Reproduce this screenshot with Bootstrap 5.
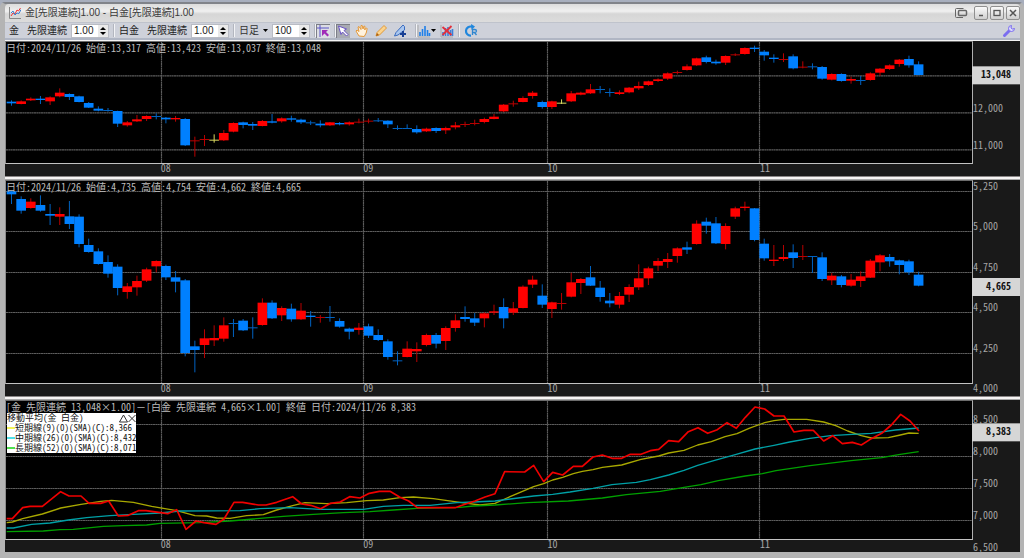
<!DOCTYPE html>
<html lang="ja">
<head>
<meta charset="utf-8">
<meta name="viewport" content="width=device-width, initial-scale=1">
<title>金[先限連続]1.00 - 白金[先限連続]1.00</title>
<link href="https://cdn.jsdelivr.net/npm/bootstrap@5.3.0/dist/css/bootstrap.min.css" rel="stylesheet">
<style>
  :root { --chart-font: "Noto Sans Mono CJK JP", "Liberation Mono", "Noto Sans CJK JP", monospace; }
  body { background: #a7aebd; font: 10px/12px "Liberation Sans", "Noto Sans CJK JP", sans-serif; color: #222; }
  .app-window { border: solid #b4b4b4; border-width: 0 4px 6px 5px; border-top: 2px solid #808389; margin-top: 2px;
    min-height: calc(100vh - 2px); border-radius: 5px 5px 0 0; background: #b4b4b4; }
  .title-strip { height: 18px; background: linear-gradient(#dcdcdc, #f0f0f0 40%, #d6d6d6 55%, #dcdcdc); border-radius: 4px 4px 0 0; }
  .title-strip h1 { font-size: 10px; line-height: 18px; color: #3a3a3a; }
  .title-btns { gap: 2px; }
  .win-btn { width: 14px; height: 14px; border: 1px solid #8f8f8f; border-radius: 2px; background: linear-gradient(#fafafa, #cfcfcf); }
  .flat-btn { border: 0; background: none; width: 14px; height: 14px; }
  .flat-btn.pressed { background: #a9abb3; box-shadow: inset 1px 1px 0 #7c7e86; }
  .flat-btn.lit { background: #dcdde3; }
  button svg, .title-strip svg, .tools svg { display: block; }
  .tools { height: 18px; background: #ced1da; border-top: 1px solid #bfc3cc; border-bottom: 2px solid #b0b6c4; }
  .tools .names, .tools .group { gap: 8px; }
  .tools .group { gap: 5px; }
  .sep { width: 2px; height: 13px; border-left: 1px solid #b3b6bf; background: #f2f3f6; }
  .num { height: 14px; background: #fff; border: 1px solid #b9bcc4; }
  .num input { width: 26px; border: 0; padding: 0 2px; font-size: 10px; line-height: 12px; color: #222; outline: 0; background: none; }
  .num .spin { width: 10px; background: #e9e9e9; }
  .num .spin button { height: 6px; border: 0; background: none; width: 10px; }
  .period { appearance: none; border: 0; background: none; font-size: 10px; line-height: 12px; width: 20px; color: #333; }
  .edge { height: 1px; background: #f4f4f4; }
  .pane { background: #191919; }
  .pane-gold { flex: 135 1 0; } .pane-plat { flex: 216 1 0; } .pane-spread { flex: 152 1 0; }
  .split { height: 4px; background: linear-gradient(#8a8686 25%, #f6f4f4 25%, #f6f4f4 75%, #a8a8a8 75%); }
  .plot { background: #000; border: 1px solid; border-color: #6c6c6c #b0b0b0 #c2c2c2 #8c8c8c; min-height: 90px; flex: 1 1 0; }
  .plot > svg { position: absolute; inset: 0; width: 100%; height: 100%; }
  .months { width: 100%; height: 12px; overflow: visible; display: block; }
  .scale { width: 47px; }
  .scale > svg { position: absolute; top: 1px; left: 0; width: 100%; height: calc(100% - 14px); overflow: visible; }
  .months text, .scale text { font: 10px var(--chart-font); fill: #a6a6a6; }
  .scale text.last { font-weight: 700; fill: #111; }
  .readout { position: absolute; left: 0; top: 0; font: 10px/11px var(--chart-font); color: #bdbdbd; white-space: nowrap; }
  .key { position: absolute; left: 1px; top: 12px; width: 129px; background: #fff; color: #111; font: 9px/10px var(--chart-font); white-space: nowrap; }
  .key .swatch { width: 8px; height: 2px; flex: none; }
  .sw-short { background: #f4f45a; } .sw-mid { background: #4fe0e8; } .sw-long { background: #4fe04f; }
  .key button { border: 0; background: none; padding: 0; }
</style>
</head>
<body>
<main class="app-window d-flex flex-column">
  <header class="title-strip d-flex align-items-center">
    <svg class="ms-1" width="12" height="12" viewBox="0 0 12 12" fill="none"><path d="M.5 0v11.500H12" stroke="#888"/><path d="M2 9l2-3 2 1 2-4 1.500 1 2-3" stroke="#e33"/><path d="M2 6l2-2 2 4 2-2 2 .5 2-4" stroke="#3b7fd0"/></svg>
    <h1 class="mb-0 ms-1 fw-normal">金[先限連続]1.00 - 白金[先限連続]1.00</h1>
    <div class="title-btns d-flex align-items-center ms-auto">
      <button class="flat-btn p-0 me-1" aria-label="別ウィンドウ"><svg width="14" height="14" viewBox="0 0 14 14" fill="none" stroke="#666"><path d="M9 11.500H2.500q-1 0-1-1v-7q0-1 1-1h7"/><rect x="4.500" y="4.500" width="8" height="5" rx="1" stroke-width="1.500"/></svg></button>
      <button class="win-btn p-0" aria-label="最小化"><svg width="12" height="12" viewBox="0 0 12 12"><path d="M4 8.500h4" stroke="#555" stroke-width="1.500"/></svg></button>
      <button class="win-btn p-0" aria-label="最大化"><svg width="12" height="12" viewBox="0 0 12 12"><rect x="3" y="3.500" width="6" height="5" fill="none" stroke="#555" stroke-width="1.300"/></svg></button>
      <button class="win-btn p-0" aria-label="閉じる"><svg width="12" height="12" viewBox="0 0 12 12"><path d="M3 3l6 6M9 3l-6 6" stroke="#555" stroke-width="1.500"/></svg></button>
    </div>
  </header>

  <nav class="tools d-flex align-items-center" aria-label="ツールバー">
    <label for="q1" class="names d-flex ps-1"><span>金</span><span>先限連続</span></label>
    <div class="num d-flex ms-1"><input id="q1" value="1.00"><div class="spin d-flex flex-column"><button class="p-0" aria-label="増"><svg width="10" height="6"><path d="M2 5l3-3 3 3z"/></svg></button><button class="p-0" aria-label="減"><svg width="10" height="6"><path d="M2 1l3 3 3-3z"/></svg></button></div></div>
    <span class="sep mx-1"></span>
    <label for="q2" class="names d-flex"><span>白金</span><span>先限連続</span></label>
    <div class="num d-flex ms-1"><input id="q2" value="1.00"><div class="spin d-flex flex-column"><button class="p-0" aria-label="増"><svg width="10" height="6"><path d="M2 5l3-3 3 3z"/></svg></button><button class="p-0" aria-label="減"><svg width="10" height="6"><path d="M2 1l3 3 3-3z"/></svg></button></div></div>
    <span class="sep mx-1"></span>
    <label class="d-flex align-items-center"><select class="period p-0" aria-label="足種"><option>日足</option></select><svg class="mx-1" width="5" height="4"><path d="M0 0h5l-2.500 3z"/></svg></label>
    <div class="num d-flex"><input value="100" aria-label="表示本数"><div class="spin d-flex flex-column"><button class="p-0" aria-label="増"><svg width="10" height="6"><path d="M2 5l3-3 3 3z"/></svg></button><button class="p-0" aria-label="減"><svg width="10" height="6"><path d="M2 1l3 3 3-3z"/></svg></button></div></div>
    <span class="sep ms-1"></span>
    <button class="flat-btn pressed lit p-0" aria-label="クロスライン"><svg width="14" height="14" viewBox="0 0 14 14"><path d="M4 1v12M1 4h12" stroke="#5b54c8"/><path d="M6 6l6 0-2 2 3 3-1.500 1.500-3-3L6 12z" fill="#a02bb8"/></svg></button>
    <span class="sep ms-1"></span>
    <div class="group d-flex">
      <button class="flat-btn pressed p-0" aria-label="選択"><svg width="14" height="14" viewBox="0 0 14 14"><path d="M2.500 2l8 3-2.500 1.500L12 10.500 10.500 12 6.500 8 5 10.500z" fill="#fff" stroke="#6a54c4"/></svg></button>
      <button class="flat-btn p-0" aria-label="移動"><svg width="14" height="14" viewBox="0 0 14 14"><path d="M4 12L1 7l1-1 2 1.500L3 3l1-.5L6 5.500V1.500h1.200L8 5l1-3 1 .4L9.700 6l1.500-2 1 .5-1 4.500-2 3.500z" fill="#fff3df" stroke="#e49a3c"/></svg></button>
      <button class="flat-btn p-0" aria-label="鉛筆"><svg width="14" height="14" viewBox="0 0 14 14"><path d="M2 12l1-3.500L10 1.500 12.500 4 5.500 11z" fill="#fbd38d" stroke="#e09a3b"/><path d="M2 12l1-3 2 2z" fill="#a65d12"/></svg></button>
      <button class="flat-btn p-0" aria-label="線の追加"><svg width="14" height="14" viewBox="0 0 14 14"><path d="M1.500 12L3 8.500 10 1l1.500 1.500V6L5 11z" fill="#a9c6ee" stroke="#3a6cc0"/><path d="M10 7v6M7 10h6" stroke="#173f94" stroke-width="2"/></svg></button>
    </div>
    <span class="sep ms-2"></span>
    <button class="flat-btn p-0" aria-label="指標"><svg width="14" height="14" viewBox="0 0 14 14"><path d="M1 1v12h12" stroke="#aaa" fill="none"/><path d="M3 12V8M5.500 12V5M8 12V2M10.500 12V6M12.500 12V9" stroke="#1f7fe8" stroke-width="1.600"/></svg></button>
    <svg class="me-1" width="5" height="4"><path d="M0 0h5l-2.500 3z"/></svg>
    <button class="flat-btn p-0" aria-label="指標の削除"><svg width="14" height="14" viewBox="0 0 14 14"><path d="M1 1v12h12" stroke="#aaa" fill="none"/><path d="M3 12V8M5.500 12V4M8 12V3M10.500 12V6M12.500 12V5" stroke="#3b7fd8" stroke-width="1.600"/><path d="M2.500 3l9 8M11.500 2l-9 9" stroke="#e2303c" stroke-width="1.800"/></svg></button>
    <span class="sep mx-1"></span>
    <button class="flat-btn p-0" aria-label="更新"><svg width="14" height="14" viewBox="0 0 14 14"><path d="M7 11.500A4.500 4.500 0 1 1 8 2.800" fill="none" stroke="#1f86dd" stroke-width="2.200"/><path d="M7 0l4 2.500L7.500 6z" fill="#1f86dd"/><path d="M8.500 11V5.500h2q2 0 2 1.500t-2 1.500h-2m2 0l2 2.500" fill="none" stroke="#2f86d0" stroke-width="1.300"/></svg></button>
    <button class="flat-btn p-0 ms-auto me-1" aria-label="設定"><svg width="14" height="14" viewBox="0 0 14 14"><path d="M2.500 11.500L7.500 6.500" stroke="#7b6df0" stroke-width="3" stroke-linecap="round"/><path d="M12.500 4.500A3 3 0 1 1 9.500 1.500L9 4l1.500 1z" fill="#dcd9ff" stroke="#7b6df0"/></svg></button>
  </nav>
  <div class="edge"></div>

  <section class="pane pane-gold d-flex" data-chart="gold">
    <div class="d-flex flex-column flex-grow-1">
      <div class="plot position-relative"><svg preserveAspectRatio="none"></svg>
        <div class="readout">日付:2024/11/26 始値:13,317 高値:13,423 安値:13,037 終値:13,048</div></div>
      <svg class="months"></svg>
    </div>
    <div class="scale position-relative"><svg></svg></div>
  </section>
  <div class="split"></div>
  <section class="pane pane-plat d-flex" data-chart="plat">
    <div class="d-flex flex-column flex-grow-1">
      <div class="plot position-relative"><svg preserveAspectRatio="none"></svg>
        <div class="readout">日付:2024/11/26 始値:4,735 高値:4,754 安値:4,662 終値:4,665</div></div>
      <svg class="months"></svg>
    </div>
    <div class="scale position-relative"><svg></svg></div>
  </section>
  <div class="split"></div>
  <section class="pane pane-spread d-flex" data-chart="spread">
    <div class="d-flex flex-column flex-grow-1">
      <div class="plot position-relative"><svg preserveAspectRatio="none"></svg>
        <div class="readout">[金 先限連続 13,048×1.00]－[白金 先限連続 4,665×1.00] 終値 日付:2024/11/26 8,383</div>
        <div class="key">
          <div class="d-flex justify-content-between"><span>移動平均(金 白金)</span>
            <span class="d-flex"><button aria-label="折りたたむ"><svg width="9" height="9" viewBox="0 0 9 9"><path d="M.5 8L4.500 1l4 7z" fill="none" stroke="#333"/></svg></button><button aria-label="閉じる"><svg width="8" height="9" viewBox="0 0 8 9"><path d="M.5 1l7 7M7.500 1l-7 7" stroke="#333"/></svg></button></span></div>
          <div class="d-flex align-items-center"><span class="swatch sw-short"></span><span>短期線(9)(0)(SMA)(C):8,366</span></div>
          <div class="d-flex align-items-center"><span class="swatch sw-mid"></span><span>中期線(26)(0)(SMA)(C):8,432</span></div>
          <div class="d-flex align-items-center"><span class="swatch sw-long"></span><span>長期線(52)(0)(SMA)(C):8,071</span></div>
        </div></div>
      <svg class="months"></svg>
    </div>
    <div class="scale position-relative"><svg></svg></div>
  </section>
</main>

<script src="https://cdn.jsdelivr.net/npm/bootstrap@5.3.0/dist/js/bootstrap.bundle.min.js"></script>
<script>
// Daily bars in plot units: r = up, b = down, y = unchanged; then high, body top, body bottom, low.
const gold = `b181,185,190,197 r181,184,192,193 r172,176,181,183 b168,176,180,192 r169,172,184,195 r145,158,169,172 b160,162,171,180 b167,169,186,187 b186,189,203,204 b199,206,212,214
b204,210,213,215 b212,213,251,261 r243,247,256,260 r225,238,244,246 r226,228,237,243 b220,228,230,238 b231,233,238,250 r228,234,238,245 b234,237,316,318 r290,301,303,350
r285,297,299,318 y283,299,302,308 r270,279,301,303 r247,249,275,277 b245,247,255,265 b246,252,257,270 r240,243,258,259 b222,244,248,250 r232,235,244,248 b227,235,239,245
b236,239,247,252 b242,247,250,255 b241,251,256,262 r246,247,256,258 b246,249,253,256 r244,247,253,257 r236,245,247,250 r236,242,244,250 b234,241,243,246 b241,242,253,264
b256,264,266,270 b253,264,266,267 b256,267,277,281 r263,266,274,276 b262,264,273,279 r260,264,271,282 r246,256,262,268 r245,252,254,261 r239,249,251,256 r233,237,246,250
r222,230,237,238 r192,194,214,216 r182,190,192,200 r169,174,186,187 r153,158,168,176 b182,186,201,206 r182,184,201,207 y178,188,191,192 r153,160,184,186 r155,158,164,166
r132,148,160,162 b138,147,150,160 b145,156,159,170 r151,157,162,165 r141,143,157,160 r125,138,145,150 r122,124,135,138 r115,118,123,126 r97,100,116,120 r92,96,99,103
r73,79,90,92 r53,55,76,78 b47,52,66,70 b59,65,70,74 r46,48,68,75 r40,43,46,48 r22,24,42,44 b17,23,27,36 b30,35,46,62 b43,53,57,68
r40,57,60,66 b43,49,85,88 r64,80,83,85 b70,79,81,88 b78,81,116,119 r100,102,119,121 b100,102,123,125 r110,117,122,131 b108,120,122,135 r97,100,120,122
r84,86,98,108 r73,76,87,90 r57,59,72,80 b47,57,76,83 b64,73,105,106`;
const plat = `b49,49,58,87 b64,72,107,116 r70,80,99,101 b61,90,107,110 b87,117,122,150 r97,117,125,150 b78,124,147,162 b118,125,207,217 b191,210,231,233 b220,229,267,269
b241,261,296,308 b268,275,339,361 r324,334,351,371 r302,318,337,362 r278,283,317,321 r256,258,274,292 b269,273,307,315 b288,307,320,352 b312,316,534,544 b497,514,525,592
r463,490,510,549 r451,489,496,513 r427,451,491,500 b432,444,447,486 b432,437,466,468 b427,457,460,491 r370,383,450,452 b376,383,430,432 r394,399,421,438 b386,401,433,440
r384,407,433,435 b408,422,426,455 r420,426,429,443 b393,426,429,440 b430,438,455,458 b458,461,470,493 r444,458,465,479 b446,454,482,489 b463,480,495,498 b493,499,546,554
b529,556,559,571 r499,521,546,547 r502,522,529,561 r476,480,510,514 b474,480,506,520 r454,459,498,525 r418,436,459,470 b394,426,432,440 b414,430,443,453 r412,415,430,457
r389,409,413,420 b370,396,430,460 r381,400,413,420 r331,335,399,400 r302,314,329,339 b328,362,389,399 r380,382,402,429 r354,384,387,404 r293,322,365,367 r309,312,324,357
b273,307,332,333 b318,338,366,380 b354,377,385,397 r351,363,389,400 r328,336,359,381 r268,310,337,345 r275,280,310,330 r249,258,272,288 r234,252,261,279 r217,220,243,263
b200,217,224,237 r136,146,207,209 b128,140,152,176 b126,145,205,207 r145,153,207,223 r95,100,125,132 r80,95,99,107 b99,100,195,199 b191,206,250,257 r210,254,258,273
r210,246,252,258 b208,232,249,279 r210,243,246,255 b243,243,246,294 b232,247,312,318 r294,302,316,330 b300,304,330,337 r297,314,332,335 r289,304,318,336 r252,257,308,309
r237,241,262,289 b237,246,259,275 b254,256,270,298 b254,259,292,300 b290,299,332,334`;
const lines = [
 ["#a8a800", 4, "20,383 37,381 68,371 127,357 182,339 243,328 302,319 335,316 400,322 455,334 530,347 585,362 620,363 650,369 690,370 740,362 790,359 830,345 878,332 915,323 980,326 1040,323 1100,317 1150,315 1200,308 1240,306 1300,311 1380,322 1440,330 1485,325 1514,312 1601,275 1631,266 1658,255 1688,247 1720,236 1747,229 1779,224 1807,217 1865,210 1923,193 1976,183 2006,174 2052,166 2093,150 2134,140 2175,125 2211,116 2247,100 2294,83 2322,77 2352,73 2420,73 2471,81 2507,92 2543,108 2584,122 2614,129 2665,128 2701,120 2727,114 2756,115"],
 ["#00a0a6", 4, "20,399 40,399 95,388 150,384 205,375 260,368 330,362 400,358 480,354 540,348 720,347 780,341 870,338 960,343 1090,343 1150,334 1210,331 1290,331 1370,323 1420,321 1485,318 1531,312 1601,303 1658,298 1710,291 1779,280 1836,269 1909,262 1951,254 2006,240 2052,226 2093,211 2144,196 2206,179 2265,162 2322,151 2369,141 2430,130 2492,122 2543,119 2614,115 2686,105 2756,99"],
 ["#00a000", 4, "20,410 130,408 180,404 220,403 310,394 370,392 440,390 480,385 600,383 690,378 760,372 850,364 940,358 1030,353 1110,350 1180,345 1250,340 1380,337 1420,333 1485,330 1582,323 1705,318 1807,309 1879,299 1981,289 2052,277 2103,269 2155,257 2236,243 2287,236 2328,227 2430,212 2553,197 2645,188 2696,179 2756,170"],
 ["#f00000", 5, "20,371 37,371 68,338 90,334 127,334 182,290 207,303 243,303 267,325 302,325 326,318 355,363 385,361 415,347 438,347 503,356 530,344 558,403 588,378 612,383 648,388 672,372 702,322 728,322 775,330 798,330 830,322 878,305 905,327 932,331 962,341 992,325 1020,321 1049,305 1080,309 1108,295 1138,289 1170,289 1200,307 1226,318 1252,338 1365,338 1395,328 1425,318 1455,306 1485,296 1514,230 1574,231 1601,211 1631,260 1658,232 1688,240 1720,214 1747,214 1779,186 1807,180 1836,190 1865,190 1891,178 1923,178 1951,167 1976,163 2006,137 2036,140 2065,110 2094,98 2123,115 2152,104 2181,83 2209,100 2236,67 2265,36 2294,42 2322,63 2352,63 2382,111 2412,106 2440,106 2471,138 2498,122 2527,146 2557,142 2584,150 2614,131 2645,115 2674,90 2702,58 2730,78 2757,108"]];
const charts = {
  gold:   { top: 6,  h: 363, bars: gold, grid: [[107.5, ""], [218.5, "12,000"], [329.5, "11,000"]], last: [106, "13,048"] },
  plat:   { top: 18, h: 606, bars: plat, grid: [[49.5, "5,250"], [169.5, "5,000"], [292.5, "4,750"], [412.5, "4,500"], [535.5, "4,250"], [655, "4,000"]], last: [336, "4,665"] },
  spread: { top: 18, h: 414, lines, grid: [[88.5, "8,500"], [184.5, "8,000"], [280.5, "7,500"], [376.5, "7,000"], [472, "6,500"]], last: [112, "8,383"] }
};
const left = 18, width = 2898, months = [[484.5, "08"], [1090.5, "09"], [1642.5, "10"], [2278.5, "11"]];
const body = { r: "#ff0000", b: "#0080ff", y: "#d8d860" }, wick = { r: "#b80000", b: "#0062c0", y: "#d8d860" };

document.querySelectorAll("[data-chart]").forEach(pane => {
  const c = charts[pane.dataset.chart];
  const plot = pane.querySelector(".plot > svg");
  plot.setAttribute("viewBox", `${left} ${c.top} ${width} ${c.h}`);
  let s = '<g stroke="#5c5c5c" stroke-width="3.500" stroke-dasharray="6 1">';
  c.grid.forEach(([y]) => { if (y < c.top + c.h) s += `<path d="M${left} ${y}h${width}"/>`; });
  months.forEach(([x]) => s += `<path d="M${x} ${c.top}v${c.h}"/>`);
  s += "</g>";
  if (c.bars) c.bars.split(/\s+/).forEach((bar, i) => {
    const k = bar[0], [hi, t, b, lo] = bar.slice(1).split(",").map(Number), x = 34.5 + 28.95 * i;
    const thin = b - t < 4;
    s += `<rect x="${x - 1.5}" y="${hi}" width="3" height="${lo - hi}" fill="${wick[k]}"/>`;
    s += `<rect x="${x - 14.5}" y="${t}" width="29" height="${Math.max(3, b - t)}" fill="${thin ? wick[k] : body[k]}"/>`;
  });
  if (c.lines) c.lines.forEach(([col, w, pts]) => s += `<polyline points="${pts}" fill="none" stroke="${col}" stroke-width="${w}" stroke-linejoin="round"/>`);
  plot.innerHTML = s;
  pane.querySelector(".months").innerHTML = months.map(([x, t]) => `<text x="${(x - left) / width * 100}%" y="8">${t}</text>`).join("");
  const pct = y => (y - c.top) / c.h * 100 + "%";
  pane.querySelector(".scale > svg").innerHTML =
    c.grid.map(([y, t]) => `<text x="0" y="${pct(y - 4)}">${t}</text>`).join("") +
    `<svg y="${pct(c.last[0])}" overflow="visible"><rect x="-1" y="-9" width="48" height="18" fill="#d6d6d6"/><text class="last" x="38" y="3" text-anchor="end">${c.last[1]}</text></svg>`;
});
</script>
</body>
</html>
